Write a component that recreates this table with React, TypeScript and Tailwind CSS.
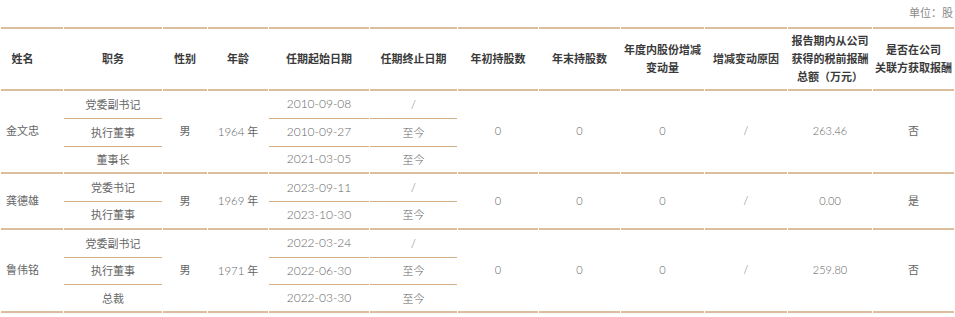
import React from "react";

interface SubRow {
  post: string;
  start: string;
  end: string;
}

interface Director {
  name: string;
  gender: string;
  age: string;
  subs: SubRow[];
  begin: string;
  finish: string;
  change: string;
  reason: string;
  pay: string;
  related: string;
}

const directors: Director[] = [
  {
    name: "金文忠",
    gender: "男",
    age: "1964",
    subs: [
      { post: "党委副书记", start: "2010-09-08", end: "/" },
      { post: "执行董事", start: "2010-09-27", end: "至今" },
      { post: "董事长", start: "2021-03-05", end: "至今" },
    ],
    begin: "0",
    finish: "0",
    change: "0",
    reason: "/",
    pay: "263.46",
    related: "否",
  },
  {
    name: "龚德雄",
    gender: "男",
    age: "1969",
    subs: [
      { post: "党委书记", start: "2023-09-11", end: "/" },
      { post: "执行董事", start: "2023-10-30", end: "至今" },
    ],
    begin: "0",
    finish: "0",
    change: "0",
    reason: "/",
    pay: "0.00",
    related: "是",
  },
  {
    name: "鲁伟铭",
    gender: "男",
    age: "1971",
    subs: [
      { post: "党委副书记", start: "2022-03-24", end: "/" },
      { post: "执行董事", start: "2022-06-30", end: "至今" },
      { post: "总裁", start: "2022-03-30", end: "至今" },
    ],
    begin: "0",
    finish: "0",
    change: "0",
    reason: "/",
    pay: "259.80",
    related: "否",
  },
];

const widths = [62, 98, 44, 60, 100, 87, 80, 81, 83, 82, 84, 81];

const font = { fontFamily: '"Lato", "Noto Sans CJK SC", sans-serif' };

const th = "whitespace-nowrap border-y-2 border-[#dcbd9c] p-0 text-center align-middle text-[11px] font-bold leading-[18px] text-[#3a3a3a]";
const span = "whitespace-nowrap border-b-2 border-[#dcbd9c] p-0 text-center align-middle text-[11px] text-[#666666]";

export default function App() {
  return (
    <div className="w-[955px] bg-white" style={font}>
      {/* 单位 */}
      <div className="flex h-[27px] items-center justify-end pr-[2px] text-[11px] text-[#8a8a8a]">
        单位：股
      </div>

      <table className="w-full table-fixed border-separate border-spacing-x-[1px] border-spacing-y-0">
        <colgroup>
          {widths.map((w, i) => (
            <col key={i} style={{ width: w }} />
          ))}
        </colgroup>
        <thead>
          <tr className="h-[64px]">
            <th className={`${th} pr-[19px]`}>姓名</th>
            <th className={th}>职务</th>
            <th className={th}>性别</th>
            <th className={th}>年龄</th>
            <th className={th}>任期起始日期</th>
            <th className={th}>任期终止日期</th>
            <th className={th}>年初持股数</th>
            <th className={th}>年末持股数</th>
            <th className={th}>
              年度内股份增减
              <br />
              变动量
            </th>
            <th className={th}>增减变动原因</th>
            <th className={th}>
              报告期内从公司
              <br />
              获得的税前报酬
              <br />
              总额（万元）
            </th>
            <th className={th}>
              是否在公司
              <br />
              关联方获取报酬
            </th>
          </tr>
        </thead>
        <tbody>
          {directors.map(d =>
            d.subs.map((s, i) => {
              const last = i === d.subs.length - 1;
              const sub = `whitespace-nowrap p-0 text-center align-middle leading-none text-[#666666] ${
                last ? "border-b-2 border-[#dcbd9c]" : "border-b border-[#d6ae86]"
              }`;
              const n = d.subs.length;
              return (
                <tr key={d.name + i} className="h-[27.75px]">
                  {i === 0 && (
                    <td rowSpan={n} className={`${span} pr-[19px]`}>
                      {d.name}
                    </td>
                  )}
                  <td className={`${sub} text-[11px]`}>{s.post}</td>
                  {i === 0 && (
                    <>
                      <td rowSpan={n} className={span}>
                        {d.gender}
                      </td>
                      <td rowSpan={n} className={span}>
                        <span className="text-[11.5px] font-light">{d.age}</span> 年
                      </td>
                    </>
                  )}
                  <td className={`${sub} text-[12px] font-light`}>{s.start}</td>
                  <td className={`${sub} text-[11px] font-light`}>{s.end}</td>
                  {i === 0 && (
                    <>
                      <td rowSpan={n} className={`${span} font-light`}>
                        {d.begin}
                      </td>
                      <td rowSpan={n} className={`${span} font-light`}>
                        {d.finish}
                      </td>
                      <td rowSpan={n} className={`${span} font-light`}>
                        {d.change}
                      </td>
                      <td rowSpan={n} className={`${span} font-light`}>
                        {d.reason}
                      </td>
                      <td rowSpan={n} className={`${span} font-light`}>
                        {d.pay}
                      </td>
                      <td rowSpan={n} className={span}>
                        {d.related}
                      </td>
                    </>
                  )}
                </tr>
              );
            })
          )}
        </tbody>
      </table>
    </div>
  );
}
